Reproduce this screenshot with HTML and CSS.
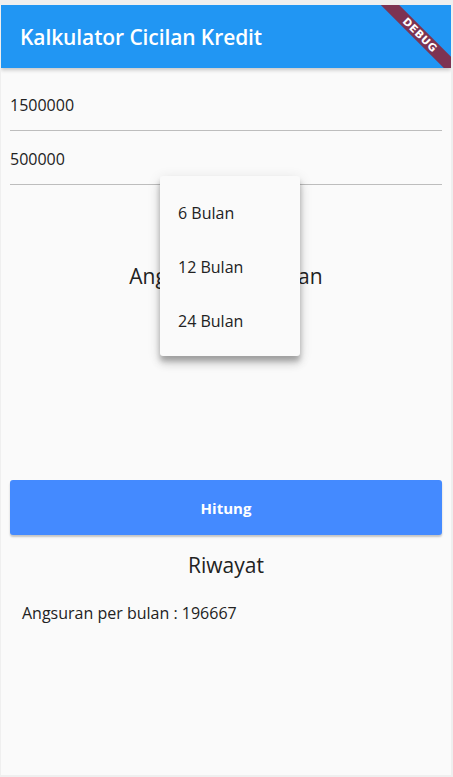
FILE: index.html
```html
<!DOCTYPE html>
<html lang="id">
<head>
<meta charset="utf-8">
<title>Kalkulator Cicilan Kredit</title>
<link rel="stylesheet" href="styles.css">
</head>
<body>
<div class="app">
  <header class="appbar">
    <h1 class="appbar-title">Kalkulator Cicilan Kredit</h1>
    <div class="debug-banner">DEBUG</div>
  </header>
  <main class="content">
    <div class="field field-first">1500000</div>
    <div class="field field-second">500000</div>
    <h2 class="result-title">Angsuran per bulan</h2>
    <button class="btn-hitung" type="button">Hitung</button>
    <h2 class="history-title">Riwayat</h2>
    <p class="history-item">Angsuran per bulan : 196667</p>
  </main>
  <ul class="menu">
    <li class="menu-item">6 Bulan</li>
    <li class="menu-item">12 Bulan</li>
    <li class="menu-item">24 Bulan</li>
  </ul>
</div>
</body>
</html>
```

FILE: styles.css
```css
html, body {
  margin: 0;
  padding: 0;
}
body {
  background: #efefef;
  font-family: "Open Sans", "Noto Sans", sans-serif;
  color: #222222;
}
.app {
  position: relative;
  margin: 5px 2px 2px 1px;
  height: 770px;
  background: #fafafa;
  overflow: hidden;
}
.appbar {
  position: relative;
  height: 63px;
  background: #2196f3;
  box-shadow: 0 2px 4px rgba(0, 0, 0, 0.22);
  display: flex;
  align-items: center;
  padding-left: 19px;
  overflow: hidden;
  z-index: 1;
}
.appbar-title {
  margin: 0;
  color: #ffffff;
  font-size: 21px;
  font-weight: 600;
  letter-spacing: -0.1px;
}
.debug-banner {
  position: absolute;
  left: 419px;
  top: 30px;
  width: 120px;
  height: 13px;
  line-height: 13px;
  transform: translate(-50%, -50%) rotate(45deg);
  background: #7d3352;
  color: #ffffff;
  font-family: "DejaVu Sans", sans-serif;
  font-size: 10.5px;
  font-weight: 700;
  text-align: center;
  letter-spacing: 0.6px;
}
.content {
  padding: 0 9px;
}
.field {
  font-size: 16px;
  line-height: 24px;
  border-bottom: 1px solid #bdbdbd;
  color: #222222;
}
.field-first {
  padding: 25px 0 13px;
}
.field-second {
  padding: 16px 0 13px;
}
.result-title {
  margin: 76px 0 0;
  text-align: center;
  font-size: 21px;
  line-height: 30px;
  font-weight: 400;
  color: #222222;
}
.btn-hitung {
  display: block;
  width: 100%;
  height: 55px;
  margin-top: 189px;
  border: none;
  border-radius: 3px;
  background: #448aff;
  color: #ffffff;
  font-family: "Open Sans", "Noto Sans", sans-serif;
  font-size: 15px;
  font-weight: 700;
  box-shadow: 0 2px 2px rgba(0, 0, 0, 0.22);
}
.history-title {
  margin: 15px 0 0;
  text-align: center;
  font-size: 21px;
  line-height: 30px;
  font-weight: 400;
  color: #222222;
}
.history-item {
  margin: 21px 0 0;
  padding-left: 12px;
  font-size: 16px;
  line-height: 24px;
  color: #222222;
}
.menu {
  position: absolute;
  left: 159px;
  top: 171px;
  width: 140px;
  height: 180px;
  margin: 0;
  padding: 10px 0 0;
  box-sizing: border-box;
  list-style: none;
  background: #fafafa;
  border-radius: 3px;
  box-shadow: 0 8px 10px rgba(0, 0, 0, 0.14), 0 3px 14px rgba(0, 0, 0, 0.12), 0 5px 5px rgba(0, 0, 0, 0.2);
}
.menu-item {
  height: 54px;
  line-height: 54px;
  padding-left: 18px;
  font-size: 16px;
  color: #222222;
}
```
